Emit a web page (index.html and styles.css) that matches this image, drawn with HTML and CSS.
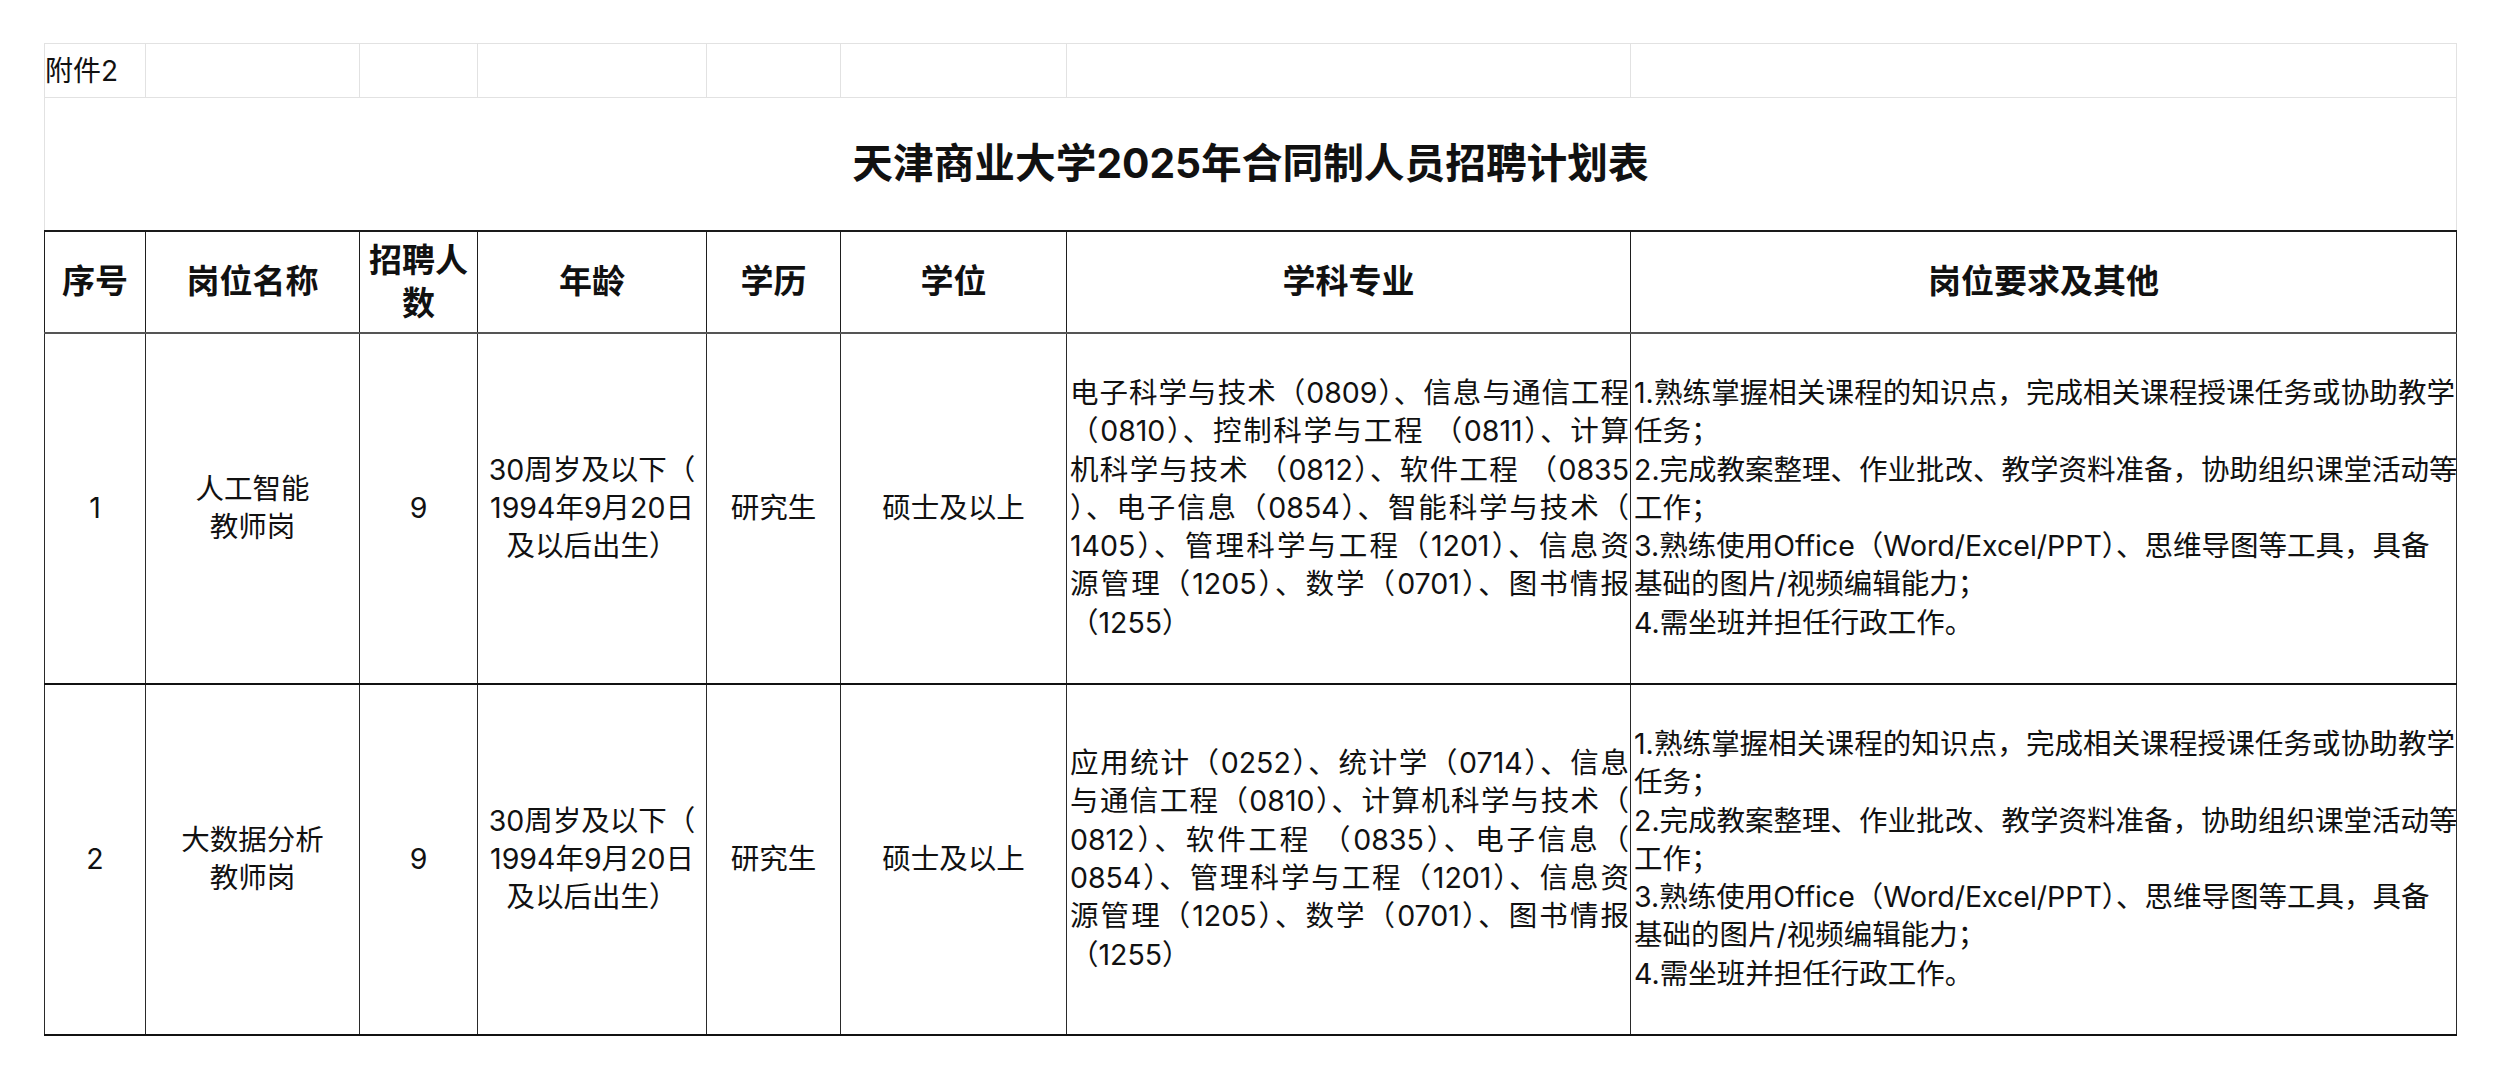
FILE: index.html
```html
<!DOCTYPE html>
<html lang="zh-CN">
<head>
<meta charset="utf-8">
<title>天津商业大学2025年合同制人员招聘计划表</title>
<link rel="stylesheet" href="styles.css">
</head>
<body>
<div class="page">
<table class="plan">
  <colgroup>
    <col class="c1"><col class="c2"><col class="c3"><col class="c4">
    <col class="c5"><col class="c6"><col class="c7"><col class="c8">
  </colgroup>
  <tr class="meta">
    <td class="annex">附件2</td><td></td><td></td><td></td><td></td><td></td><td></td><td></td>
  </tr>
  <tr class="title-row">
    <td colspan="8" class="title">天津商业大学2025年合同制人员招聘计划表</td>
  </tr>
  <tr class="head">
    <th>序号</th>
    <th>岗位名称</th>
    <th>招聘人<br>数</th>
    <th>年龄</th>
    <th>学历</th>
    <th>学位</th>
    <th>学科专业</th>
    <th>岗位要求及其他</th>
  </tr>
  <tr class="row">
    <td class="ctr">1</td>
    <td class="ctr">人工智能<br>教师岗</td>
    <td class="ctr">9</td>
    <td class="ctr">30周岁及以下（<br>1994年9月20日<br>及以后出生）</td>
    <td class="ctr">研究生</td>
    <td class="ctr">硕士及以上</td>
    <td class="txt">
      <div class="ln">电子科学与技术（0809）、信息与通信工程</div>
      <div class="ln">（0810）、控制科学与工程 （0811）、计算</div>
      <div class="ln">机科学与技术 （0812）、软件工程 （0835</div>
      <div class="ln">）、电子信息（0854）、智能科学与技术（</div>
      <div class="ln">1405）、管理科学与工程（1201）、信息资</div>
      <div class="ln">源管理（1205）、数学（0701）、图书情报</div>
      <div class="ln end">（1255）</div>
    </td>
    <td class="txt">
      <div class="ln">1.熟练掌握相关课程的知识点，完成相关课程授课任务或协助教学</div>
      <div class="ln end">任务；</div>
      <div class="ln">2.完成教案整理、作业批改、教学资料准备，协助组织课堂活动等</div>
      <div class="ln end">工作；</div>
      <div class="ln end">3.熟练使用Office（Word/Excel/PPT）、思维导图等工具，具备</div>
      <div class="ln end">基础的图片/视频编辑能力；</div>
      <div class="ln end">4.需坐班并担任行政工作。</div>
    </td>
  </tr>
  <tr class="row">
    <td class="ctr">2</td>
    <td class="ctr">大数据分析<br>教师岗</td>
    <td class="ctr">9</td>
    <td class="ctr">30周岁及以下（<br>1994年9月20日<br>及以后出生）</td>
    <td class="ctr">研究生</td>
    <td class="ctr">硕士及以上</td>
    <td class="txt">
      <div class="ln">应用统计（0252）、统计学（0714）、信息</div>
      <div class="ln">与通信工程（0810）、计算机科学与技术（</div>
      <div class="ln">0812）、软件工程 （0835）、电子信息（</div>
      <div class="ln">0854）、管理科学与工程（1201）、信息资</div>
      <div class="ln">源管理（1205）、数学（0701）、图书情报</div>
      <div class="ln end">（1255）</div>
    </td>
    <td class="txt">
      <div class="ln">1.熟练掌握相关课程的知识点，完成相关课程授课任务或协助教学</div>
      <div class="ln end">任务；</div>
      <div class="ln">2.完成教案整理、作业批改、教学资料准备，协助组织课堂活动等</div>
      <div class="ln end">工作；</div>
      <div class="ln end">3.熟练使用Office（Word/Excel/PPT）、思维导图等工具，具备</div>
      <div class="ln end">基础的图片/视频编辑能力；</div>
      <div class="ln end">4.需坐班并担任行政工作。</div>
    </td>
  </tr>
</table>
</div>
</body>
</html>
```

FILE: styles.css
```css
html, body {
  margin: 0;
  padding: 0;
  background: #ffffff;
}

body {
  font-family: "Inter", "Noto Sans CJK SC", sans-serif;
  color: #111111;
}

.page {
  padding: 43px 0 0 44px;
}

.plan {
  border-collapse: collapse;
  table-layout: fixed;
  width: 2412px;
}

.c1 { width: 101px; }
.c2 { width: 214px; }
.c3 { width: 118px; }
.c4 { width: 229px; }
.c5 { width: 134px; }
.c6 { width: 226px; }
.c7 { width: 564px; }
.c8 { width: 826px; }

.plan td,
.plan th {
  padding: 0;
  vertical-align: middle;
}

/* light spreadsheet gridlines for the top rows */
.meta td,
.title-row td {
  border: 1px solid #e2e2e2;
}

.meta {
  height: 54px;
}

.annex {
  font-size: 28px;
  line-height: 34px;
  text-align: left;
  padding-left: 2px;
  padding-top: 4px;
  white-space: nowrap;
}

.title-row {
  height: 133px;
}

.title {
  text-align: center;
  font-size: 40.7px;
  font-weight: 700;
  line-height: 50px;
}

.head {
  height: 102px;
}

.head th {
  border: 1px solid #1e1e1e;
  border-top: 2px solid #1a1a1a;
  border-bottom: 2px solid #555555;
  font-size: 33px;
  font-weight: 700;
  line-height: 43px;
  text-align: center;
}

.row {
  height: 351px;
}

.row td {
  border: 1px solid #2a2a2a;
  border-bottom: 2px solid #111111;
  font-size: 28.5px;
  line-height: 38.3px;
}

.ctr {
  text-align: center;
}

.txt {
  text-align: left;
  padding-left: 3px !important;
  padding-right: 1px !important;
}

.ln {
  white-space: nowrap;
  text-align: justify;
  text-align-last: justify;
  text-justify: inter-character;
}

.ln.end {
  text-align: left;
  text-align-last: left;
}
```
